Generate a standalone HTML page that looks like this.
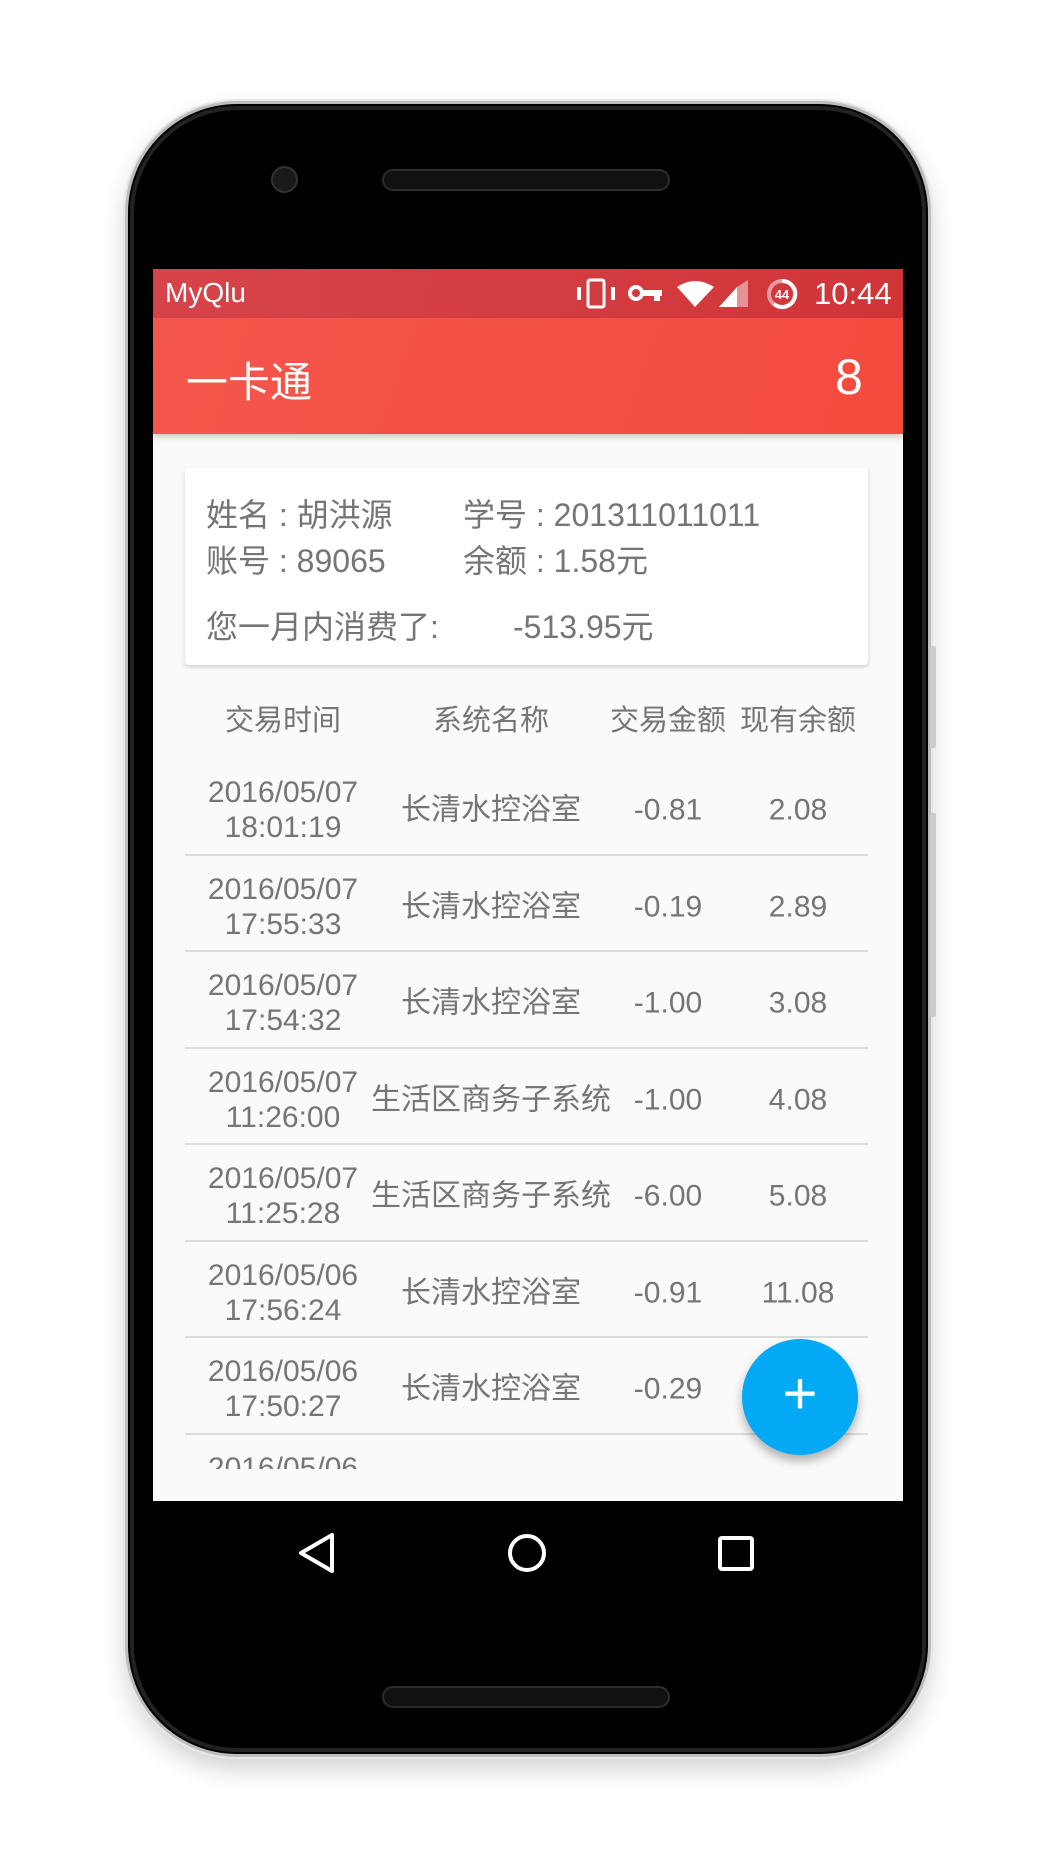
<!DOCTYPE html>
<html><head><meta charset="utf-8"><style>
*{margin:0;padding:0;box-sizing:border-box}
body{width:1055px;height:1875px;background:#fff;position:relative;overflow:hidden;font-family:"Liberation Sans","Noto Sans CJK SC",sans-serif}
.phone{position:absolute;left:125px;top:101px;width:806px;height:1656px;border-radius:112px;background:#000;border:3px solid #bdbdbd;box-shadow:0 0 0 2px #e8e8e8,0 12px 24px rgba(0,0,0,.18)}
.phone:before{content:"";position:absolute;inset:2px;border-radius:107px;border:4px solid #222}
.btn{position:absolute;left:930px;width:6px;background:#ccc;border-radius:2px}
.screen{position:absolute;left:153px;top:269px;width:750px;height:1232px;background:#fafafa;overflow:hidden}
.status{position:absolute;left:0;top:0;width:750px;height:49px;background:linear-gradient(100deg,#d6444a,#d03538);color:#fff;font-size:28px}
.appbar{position:absolute;left:0;top:49px;width:750px;height:116px;background:linear-gradient(110deg,#f4574c,#f44a3e);box-shadow:0 3px 6px rgba(0,0,0,.2)}
.card{position:absolute;left:32px;top:199px;width:683px;height:197px;background:#fff;border-radius:4px;box-shadow:0 2px 4px rgba(0,0,0,.18);color:#757575;font-size:32px}
.card div{position:absolute;white-space:nowrap}
.hdr,.row{position:absolute;left:32px;width:683px;color:#757575;font-size:29px}
.c{position:absolute;text-align:center;white-space:nowrap;transform:translateX(-50%)}
.row{height:96.5px;border-bottom:2px solid #dcdcdc;font-size:30px}
.row .c{top:calc(50% + 4px);transform:translate(-50%,-50%);line-height:35px}
.fab{position:absolute;left:742px;top:1339px;width:116px;height:116px;border-radius:50%;background:#03a9f4;box-shadow:0 6px 10px rgba(0,0,0,.3);color:#fff;font-size:60px;text-align:center;line-height:110px}
</style></head><body>
<div class="phone"></div>
<div class="btn" style="top:646px;height:102px"></div>
<div class="btn" style="top:813px;height:204px"></div>
<div style="position:absolute;left:271px;top:166px;width:27px;height:27px;border-radius:50%;background:#1a1a1a;border:2px solid #333"></div>
<div style="position:absolute;left:382px;top:169px;width:288px;height:22px;border-radius:11px;background:#111;border:2px solid #2c2c2c"></div>
<div style="position:absolute;left:382px;top:1686px;width:288px;height:22px;border-radius:11px;background:#111;border:2px solid #2c2c2c"></div>
<div class="screen">
 <div class="status">
  <span style="position:absolute;left:12px;top:8px">MyQlu</span>
  <svg style="position:absolute;left:424px;top:8px" width="230" height="34" viewBox="0 0 230 34" fill="#fff">
   <rect x="11" y="3" width="16" height="27" rx="2" fill="none" stroke="#fff" stroke-width="3"/><rect x="0" y="10" width="4" height="13"/><rect x="34" y="10" width="4" height="13"/>
   <circle cx="59" cy="16" r="6" fill="none" stroke="#fff" stroke-width="4"/><rect x="63" y="13" width="22" height="6"/><rect x="77" y="13" width="6" height="11"/>
   <path d="M100 10 Q118 -2 137 10 L118 30 Z"/>
   <path d="M142 30 L160 30 L160 10 Z"/>
   <path d="M160 30 L171 30 L171 3 L160 10 Z" opacity=".45"/>
   <circle cx="205" cy="17" r="13" fill="none" stroke="#fff" stroke-width="4" opacity=".5"/>
   <path d="M205 4 A13 13 0 1 1 197 27" fill="none" stroke="#fff" stroke-width="4"/>
   <text x="205" y="22" font-size="13" font-weight="bold" text-anchor="middle" font-family="Liberation Sans" fill="#fff">44</text>
  </svg>
  <span style="position:absolute;left:661px;top:7px;font-size:31px">10:44</span>
 </div>
 <div class="appbar">
  <span style="position:absolute;left:33px;top:31px;color:#fff;font-size:42px">一卡通</span>
  <span style="position:absolute;left:682px;top:30px;color:#fff;font-size:50px">8</span>
 </div>
 <div class="card">
  <div style="left:21px;top:22px">姓名 : 胡洪源</div>
  <div style="left:278px;top:22px">学号 : 201311011011</div>
  <div style="left:21px;top:68px">账号 : 89065</div>
  <div style="left:278px;top:68px">余额 : 1.58元</div>
  <div style="left:21px;top:134px">您一月内消费了:</div>
  <div style="left:328px;top:134px">-513.95元</div>
 </div>
 <div class="hdr" style="top:428px;height:40px">
  <div class="c" style="left:98px">交易时间</div><div class="c" style="left:306px">系统名称</div><div class="c" style="left:483px">交易金额</div><div class="c" style="left:613px">现有余额</div>
 </div>
 <div style="position:absolute;left:0;top:0;width:750px;height:1200px;overflow:hidden">
 <div class="row" style="top:490px"><div class="c" style="left:98px">2016/05/07<br>18:01:19</div><div class="c" style="left:306px">长清水控浴室</div><div class="c" style="left:483px">-0.81</div><div class="c" style="left:613px">2.08</div></div>
 <div class="row" style="top:586.5px"><div class="c" style="left:98px">2016/05/07<br>17:55:33</div><div class="c" style="left:306px">长清水控浴室</div><div class="c" style="left:483px">-0.19</div><div class="c" style="left:613px">2.89</div></div>
 <div class="row" style="top:683px"><div class="c" style="left:98px">2016/05/07<br>17:54:32</div><div class="c" style="left:306px">长清水控浴室</div><div class="c" style="left:483px">-1.00</div><div class="c" style="left:613px">3.08</div></div>
 <div class="row" style="top:779.5px"><div class="c" style="left:98px">2016/05/07<br>11:26:00</div><div class="c" style="left:306px">生活区商务子系统</div><div class="c" style="left:483px">-1.00</div><div class="c" style="left:613px">4.08</div></div>
 <div class="row" style="top:876px"><div class="c" style="left:98px">2016/05/07<br>11:25:28</div><div class="c" style="left:306px">生活区商务子系统</div><div class="c" style="left:483px">-6.00</div><div class="c" style="left:613px">5.08</div></div>
 <div class="row" style="top:972.5px"><div class="c" style="left:98px">2016/05/06<br>17:56:24</div><div class="c" style="left:306px">长清水控浴室</div><div class="c" style="left:483px">-0.91</div><div class="c" style="left:613px">11.08</div></div>
 <div class="row" style="top:1069px"><div class="c" style="left:98px">2016/05/06<br>17:50:27</div><div class="c" style="left:306px">长清水控浴室</div><div class="c" style="left:483px">-0.29</div><div class="c" style="left:613px">12.08</div></div>
 <div class="row" style="top:1165.5px"><div class="c" style="left:98px">2016/05/06<br>17:49:00</div><div class="c" style="left:306px">长清水控浴室</div><div class="c" style="left:483px">-1.00</div><div class="c" style="left:613px">12.37</div></div>
 </div>
</div>
<div class="fab">+</div>
<svg style="position:absolute;left:288px;top:1518px" width="480" height="70" viewBox="0 0 480 70" fill="none" stroke="#fff" stroke-width="4">
 <path d="M44 17 L44 53 L13 35 Z" stroke-linejoin="round"/>
 <circle cx="239" cy="35" r="17"/>
 <rect x="432" y="20" width="32" height="31" rx="2"/>
</svg>
</body></html>
